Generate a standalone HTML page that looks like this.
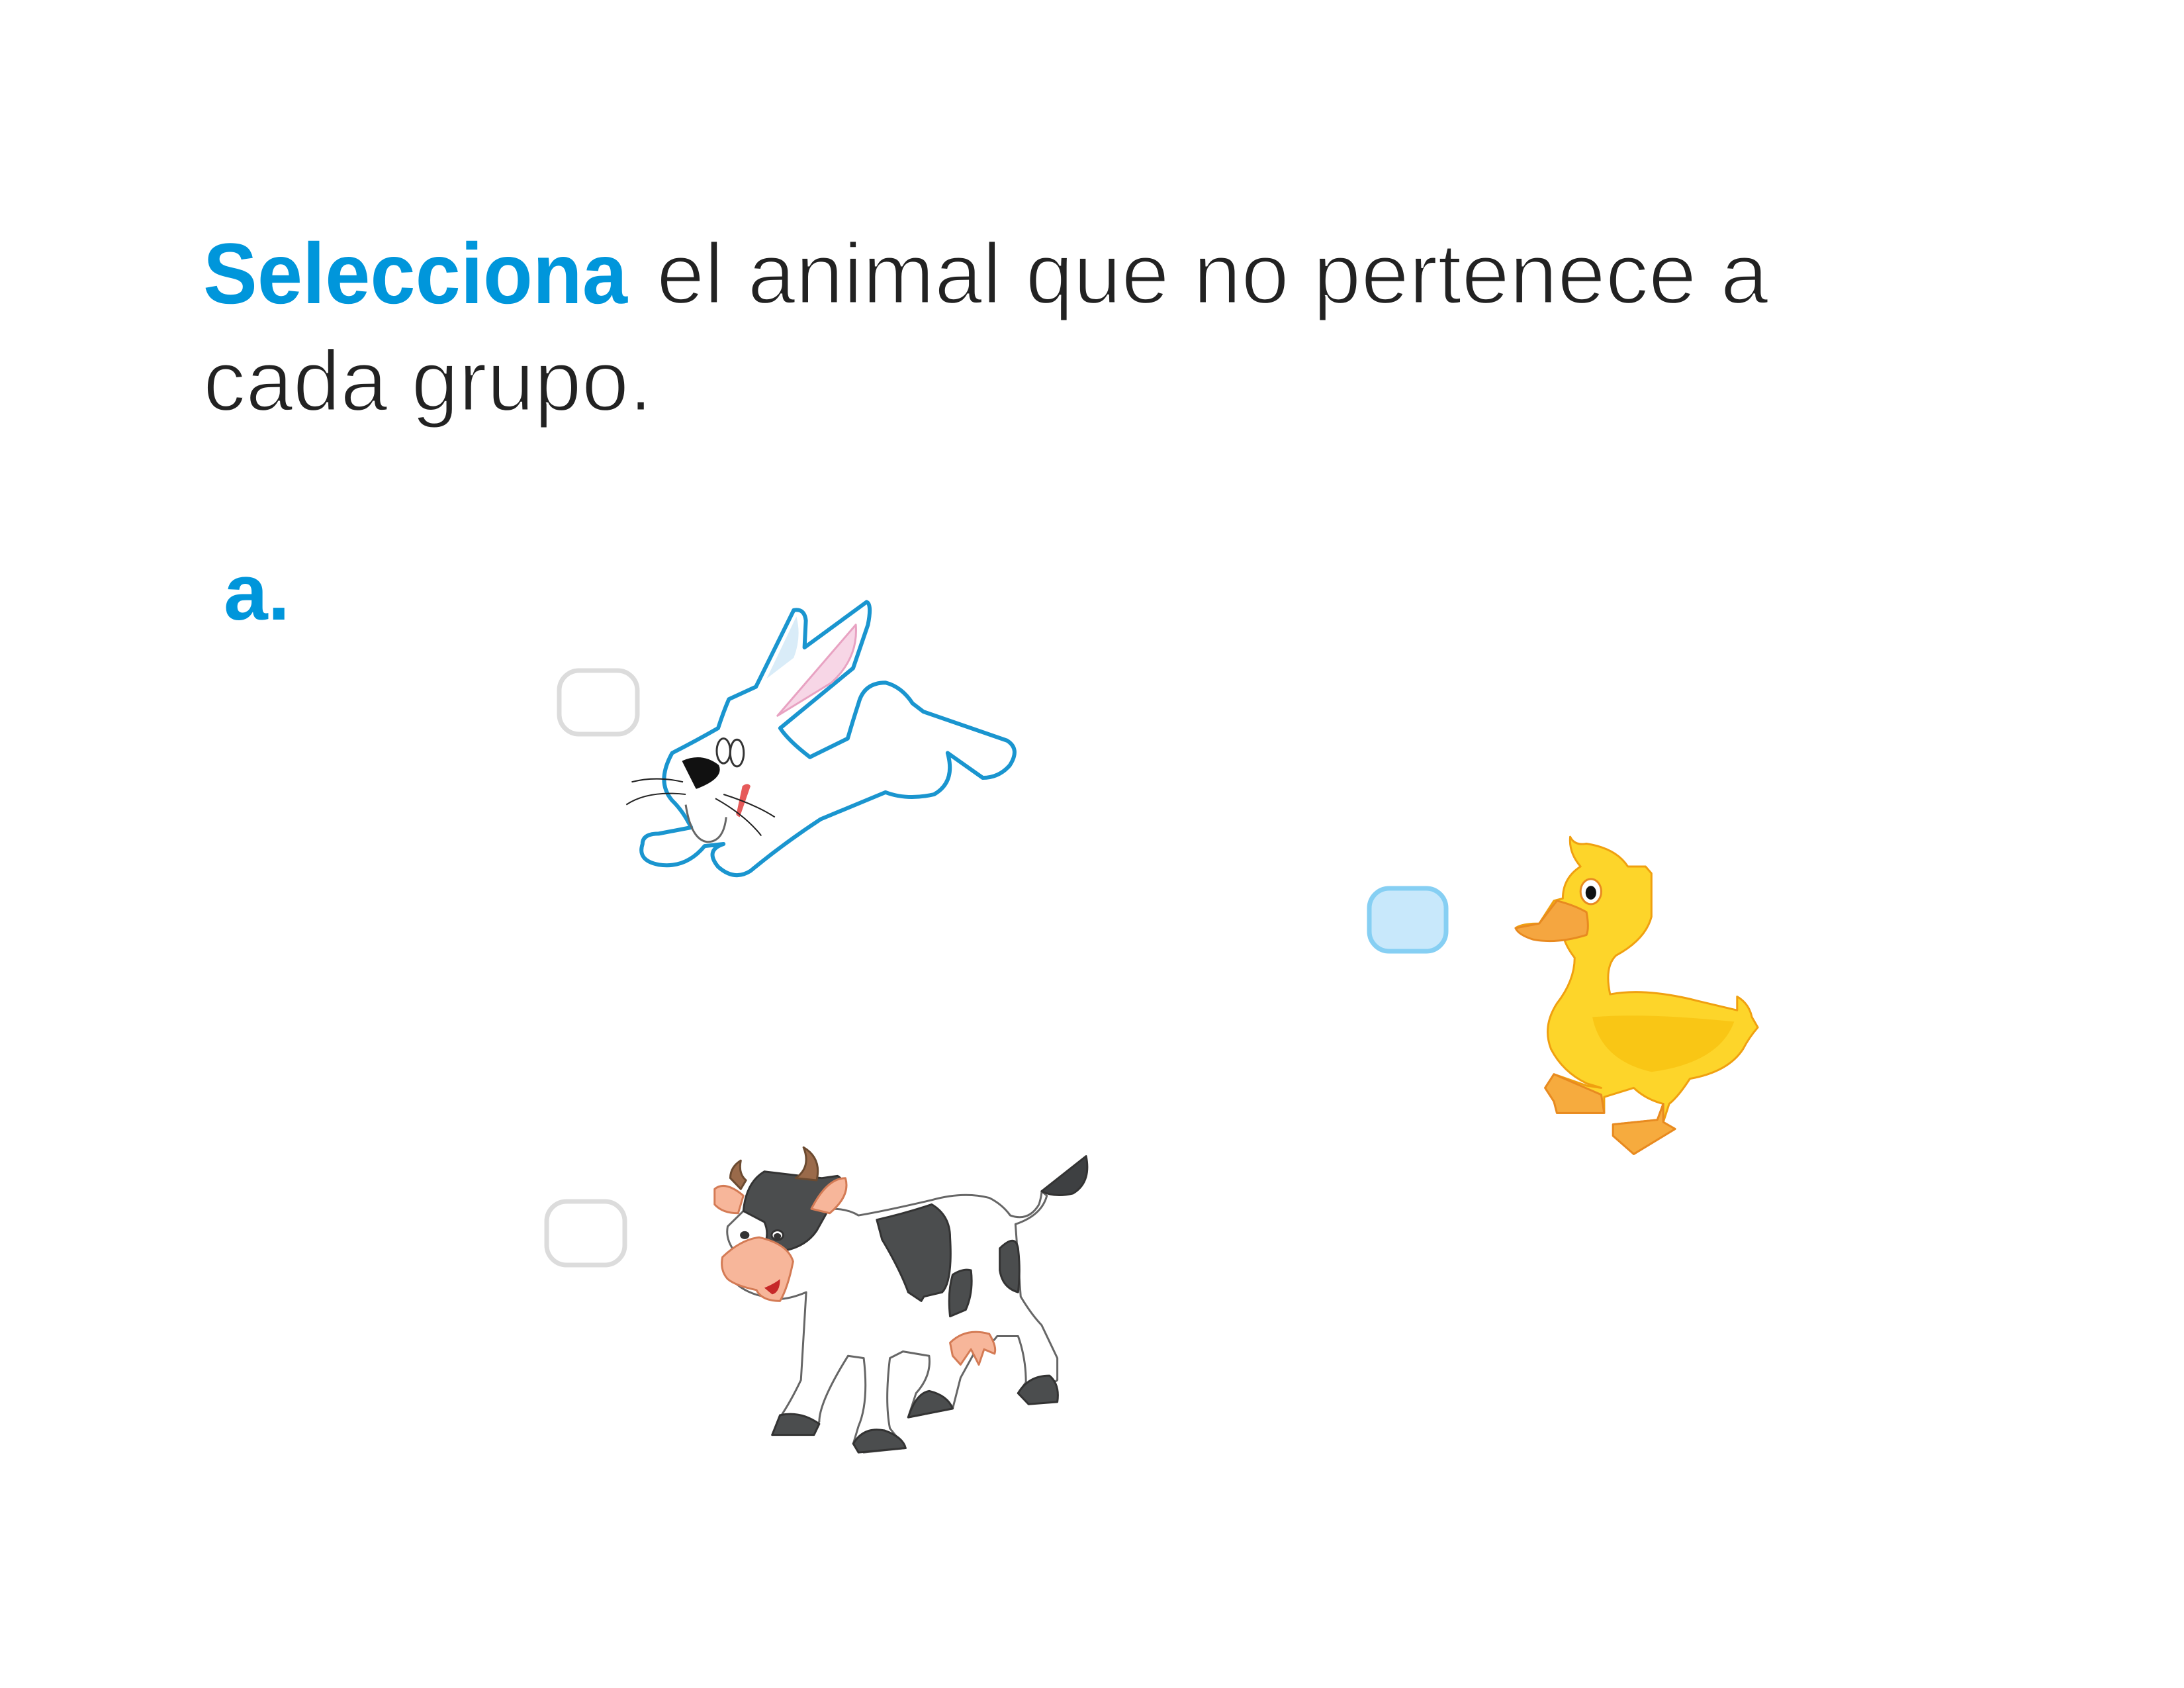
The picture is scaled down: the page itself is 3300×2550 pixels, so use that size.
<!DOCTYPE html>
<html><head><meta charset="utf-8"><style>
html,body{margin:0;padding:0;background:#fff;width:3300px;height:2550px;overflow:hidden}
svg{display:block}
</style></head><body>
<svg width="3300" height="2550" viewBox="0 0 3300 2550" xmlns="http://www.w3.org/2000/svg">
<rect width="3300" height="2550" fill="#fff"/>
<text x="307" y="458" font-family="Liberation Sans, sans-serif" font-size="130" font-weight="bold" fill="#0096db" textLength="641" lengthAdjust="spacingAndGlyphs">Selecciona</text>
<text x="992" y="458" font-family="Liberation Sans, sans-serif" font-size="130" fill="#222" stroke="#fff" stroke-width="3" textLength="1680" lengthAdjust="spacingAndGlyphs">el animal que no pertenece a</text>
<text x="307" y="620" font-family="Liberation Sans, sans-serif" font-size="130" fill="#222" stroke="#fff" stroke-width="3" textLength="679" lengthAdjust="spacingAndGlyphs">cada grupo.</text>
<text x="338" y="936" font-family="Liberation Sans, sans-serif" font-size="120" font-weight="bold" fill="#0096db" textLength="100" lengthAdjust="spacingAndGlyphs">a.</text>

<rect x="845" y="1013" width="118" height="96" rx="30" fill="#fff" stroke="#dcdcdc" stroke-width="7"/>
<rect x="826" y="1815" width="118" height="96" rx="30" fill="#fff" stroke="#dcdcdc" stroke-width="7"/>
<rect x="2069" y="1342" width="116" height="95" rx="30" fill="#c8e8fb" stroke="#86cff3" stroke-width="7"/>

<!-- rabbit -->
<g transform="translate(930,900) scale(0.408,0.3125)" stroke="#1a95cf" stroke-width="6" fill="#fff" stroke-linejoin="round">
<path vector-effect="non-scaling-stroke" d="M520 440 L660 70 Q700 60 705 120 L700 250 L930 30 Q950 40 935 140 L880 350 L610 640 Q640 700 720 780 L860 690 Q880 600 900 520 Q920 420 1000 420 Q1060 440 1100 520 L1140 560 L1450 700 Q1500 740 1460 820 Q1420 880 1360 880 L1230 760 Q1260 900 1180 960 Q1080 990 1000 950 L760 1080 Q620 1200 500 1330 Q440 1380 380 1310 Q330 1230 400 1200 L330 1210 Q260 1320 160 1300 Q80 1280 100 1200 Q100 1150 160 1150 L280 1120 Q250 1040 210 990 Q150 900 210 760 Q300 700 380 640 Q400 560 420 500 Z"/>
<path d="M560 400 L670 100 Q690 200 660 300 Z" fill="#d9ecf8" stroke="none"/>
<path d="M600 580 L890 140 Q900 300 800 420 Z" fill="#f7d6e6" stroke="#e8a2c2" stroke-width="3" vector-effect="non-scaling-stroke"/>
<path d="M250 800 Q320 760 380 820 Q400 880 300 930 Z" fill="#111" stroke="#111"/>
<ellipse cx="400" cy="750" rx="25" ry="60" fill="#fff" stroke="#333" stroke-width="3" vector-effect="non-scaling-stroke"/>
<ellipse cx="450" cy="760" rx="25" ry="65" fill="#fff" stroke="#333" stroke-width="3" vector-effect="non-scaling-stroke"/>
<path d="M470 920 Q490 900 500 920 L460 1070 Q440 1060 450 1040 Z" fill="#e65a5a" stroke="none"/>
<path d="M260 1010 Q280 1180 340 1190 Q400 1190 410 1070" fill="none" stroke="#666" stroke-width="3" vector-effect="non-scaling-stroke"/>
<path d="M60 900 Q150 870 250 900 M40 1010 Q120 940 260 960 M400 960 Q520 1010 590 1070 M370 980 Q480 1060 540 1160" fill="none" stroke="#222" stroke-width="2" vector-effect="non-scaling-stroke"/>
</g>

<!-- duck -->
<g transform="translate(2040,1240) scale(0.4464,0.3448)" stroke="#f0a010" stroke-width="3" stroke-linejoin="round">
<path vector-effect="non-scaling-stroke" d="M745 70 Q760 110 800 100 Q900 120 940 200 L1000 200 L1020 230 Q1020 300 1020 420 Q1000 520 900 590 Q860 640 880 760 Q1000 730 1180 790 L1310 830 L1310 770 Q1350 800 1360 860 L1380 905 Q1350 950 1330 1000 Q1280 1100 1150 1130 Q1110 1210 1080 1240 L1060 1320 L1100 1350 L960 1460 L890 1380 L890 1330 L1040 1310 L1060 1240 Q1000 1220 960 1170 L860 1210 L860 1280 L700 1280 L690 1230 L660 1170 L690 1110 L800 1160 L850 1170 L800 1150 Q720 1100 680 1000 Q650 900 700 800 Q760 700 760 600 Q730 550 720 500 L660 520 Q570 500 560 470 Q580 450 640 450 L690 350 L720 340 Q720 250 780 200 Q740 140 745 70 Z" fill="#fdd52a"/>
<path d="M560 470 Q600 460 640 450 L700 350 Q760 370 800 400 Q810 470 800 500 Q700 540 620 520 Q570 500 560 470 Z" fill="#f5a640" stroke="#e88a20" vector-effect="non-scaling-stroke"/>
<path d="M690 1110 L850 1200 L860 1280 L700 1280 L690 1230 L660 1170 Z M1060 1240 L1060 1320 L1100 1350 L960 1460 L890 1380 L890 1330 L1040 1310 Z" fill="#f6ab3e" stroke="#e88a20" vector-effect="non-scaling-stroke"/>
<ellipse cx="815" cy="310" rx="35" ry="55" fill="#fff" stroke="#e88a20" vector-effect="non-scaling-stroke"/>
<ellipse cx="815" cy="315" rx="18" ry="30" fill="#111" stroke="none"/>
<path d="M820 860 Q1000 840 1300 880 Q1250 1060 1020 1100 Q850 1050 820 860 Z" fill="#f9c615" stroke="none"/>
</g>

<!-- cow -->
<g transform="translate(1060,1720) scale(0.3953,0.3316)" stroke="#666" stroke-width="3" stroke-linejoin="round">
<path vector-effect="non-scaling-stroke" d="M160 330 Q200 290 260 290 L500 320 Q560 320 600 350 Q700 330 880 280 Q1000 240 1100 270 Q1150 300 1180 350 Q1250 380 1290 300 Q1300 260 1300 240 L1320 260 Q1300 350 1200 390 Q1210 550 1220 720 Q1260 800 1300 850 L1360 1000 L1360 1100 L1250 1200 L1210 1160 L1240 1110 Q1240 1000 1210 900 L1130 900 Q1100 950 1050 960 L990 1090 L960 1230 L790 1270 L820 1160 Q880 1080 870 990 L770 970 L720 1000 Q700 1200 720 1320 L780 1410 L620 1430 L580 1390 L600 1310 Q640 1200 620 1000 L560 990 Q450 1200 450 1290 L410 1340 L270 1350 L300 1270 Q340 1200 380 1100 Q390 900 400 700 Q300 750 240 720 Q150 700 100 620 Q70 560 100 530 L130 520 Q90 460 100 400 Z" fill="#fff"/>
<path d="M1140 500 Q1200 430 1210 500 Q1220 600 1210 700 Q1150 680 1140 600 Z M670 370 Q780 340 880 300 Q950 350 950 450 Q960 650 920 700 L850 720 L840 740 L790 700 Q760 600 690 460 Z M960 620 Q1000 590 1030 600 Q1040 700 1010 780 L950 810 Q940 700 960 620 Z" fill="#4b4d4e" stroke="#333" vector-effect="non-scaling-stroke"/>
<path d="M160 330 Q170 200 240 150 L380 170 L460 180 L520 170 Q560 200 520 250 L440 420 Q400 490 320 510 L240 490 Q260 430 240 380 Z" fill="#4b4d4e" stroke="#333" vector-effect="non-scaling-stroke"/>
<path d="M1300 240 L1470 80 Q1490 200 1420 250 Q1350 270 1300 240 Z" fill="#3e4042" stroke="#333" vector-effect="non-scaling-stroke"/>
<path d="M150 230 L110 180 Q110 130 150 100 Q140 160 170 190 Z M360 180 Q420 130 390 40 Q460 90 440 190 Z" fill="#9a6a4a" stroke="#6b4a30" vector-effect="non-scaling-stroke"/>
<path d="M50 230 Q90 190 160 260 L140 340 Q80 340 50 300 Z M420 320 Q480 180 550 180 Q570 260 490 340 Z" fill="#f7b69a" stroke="#d47b55" vector-effect="non-scaling-stroke"/>
<path d="M80 540 Q150 460 220 450 Q330 480 350 560 Q330 680 300 740 Q230 740 210 690 Q130 670 100 640 Q70 600 80 540 Z" fill="#f7b69a" stroke="#d47b55" vector-effect="non-scaling-stroke"/>
<path d="M240 680 Q280 660 300 640 Q300 700 270 710 Z" fill="#c62828" stroke="none"/>
<path d="M950 930 Q1010 860 1100 890 Q1130 950 1120 980 L1080 960 L1060 1030 L1030 960 L990 1030 L960 990 Z" fill="#f7b69a" stroke="#d47b55" vector-effect="non-scaling-stroke"/>
<path d="M270 1350 L300 1260 Q380 1240 450 1300 L430 1350 Z M580 1390 Q620 1310 700 1330 Q770 1360 780 1410 L600 1430 Z M790 1270 Q820 1160 870 1150 Q940 1170 960 1230 Z M1210 1160 Q1250 1080 1330 1080 Q1370 1120 1360 1200 L1250 1210 Z" fill="#4b4d4e" stroke="#333" vector-effect="non-scaling-stroke"/>
<circle cx="165" cy="440" r="18" fill="#333" stroke="none"/>
<circle cx="290" cy="440" r="22" fill="#fff" stroke="#333" vector-effect="non-scaling-stroke"/>
<circle cx="290" cy="445" r="14" fill="#333" stroke="none"/>
</g>
</svg>
</body></html>
